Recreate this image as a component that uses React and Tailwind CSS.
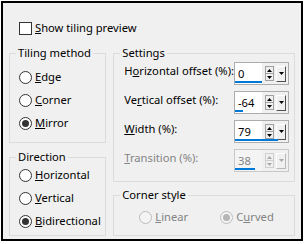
import React from 'react';

const font = { fontFamily: '"Noto Sans", "DejaVu Sans", sans-serif' };

const Radio = ({ checked, disabled, children, className = '' }) => (
    <div className={`flex items-center h-4 ${className}`}>
        <div
            className={`w-[13px] h-[13px] rounded-full border flex items-center justify-center shrink-0 ${
                disabled ? 'border-[#bcbcbc] bg-[#f4f4f4]' : 'border-[#333333] bg-white'
            }`}
        >
            {checked && (
                <div className={`w-[7px] h-[7px] rounded-full ${disabled ? 'bg-[#b5b5b5]' : 'bg-[#333333]'}`} />
            )}
        </div>
        <span className={`ml-[3px] leading-4 whitespace-nowrap ${disabled ? 'text-[#838383]' : 'text-black'}`}>{children}</span>
    </div>
);

const Group = ({ title, className = '', children }) => (
    <fieldset className={`border border-[#dcdcdc] m-0 p-0 min-w-0 ${className}`}>
        <legend className="ml-[6px] px-[2px] leading-4 text-black whitespace-nowrap">{title}</legend>
        {children}
    </fieldset>
);

const Up = ({ color }) => (
    <svg width="5" height="3" viewBox="0 0 5 3">
        <polygon points="0,3 5,3 2.5,0" fill={color} />
    </svg>
);

const Down = ({ color }) => (
    <svg width="5" height="3" viewBox="0 0 5 3">
        <polygon points="0,0 5,0 2.5,3" fill={color} />
    </svg>
);

const Spin = ({ value, bar, disabled }) => {
    const arrow = disabled ? '#a8a8a8' : '#000000';
    return (
        <div className={`relative shrink-0 flex items-center w-[55px] h-[23px] border ${disabled ? 'border-[#c8c8c8]' : 'border-[#acacac]'} bg-[#f0f0f0]`}>
            <div className={`w-[27px] h-full pl-[3px] flex items-center leading-4 ${disabled ? 'bg-[#f4f4f4] text-[#838383]' : 'bg-white text-black'}`}>
                {value}
            </div>
            <div className={`ml-[3px] w-[9px] h-[15px] flex flex-col border ${disabled ? 'border-[#cfcfcf]' : 'border-[#a0a0a0]'} bg-[#f0f0f0]`}>
                <div className={`flex-1 flex items-center justify-center border-b ${disabled ? 'border-[#cfcfcf]' : 'border-[#a0a0a0]'}`}>
                    <Up color={arrow} />
                </div>
                <div className="flex-1 flex items-center justify-center">
                    <Down color={arrow} />
                </div>
            </div>
            <div className={`ml-[2px] w-[10px] h-[16px] flex items-center justify-center border border-t-white border-l-white ${disabled ? 'border-r-[#b8b8b8] border-b-[#b8b8b8]' : 'border-r-[#505050] border-b-[#505050]'} bg-[#f0f0f0]`}>
                <Down color={arrow} />
            </div>
            <div className="absolute left-0 bottom-[1px] h-[2px] bg-[#0078d7]" style={{ width: bar }} />
        </div>
    );
};

const Row = ({ label, children, disabled }) => (
    <div className="flex items-start justify-between">
        <span className={`pt-[1px] leading-4 whitespace-nowrap ${disabled ? 'text-[#838383]' : 'text-black'}`}>{label}</span>
        {children}
    </div>
);

export default function App() {
    return (
        <div className="w-[307px] h-[244px] bg-white pl-px pt-px text-[11.2px]" style={font}>
            <div className="w-[302px] h-[240px] border-2 border-black bg-[#f0f0f0] px-[6px]">
                <div className="mt-[17px] ml-[10px] flex items-center h-4">
                    <div className="w-[13px] h-[13px] border border-[#333333] bg-white" />
                    <span className="ml-[3px] leading-4 whitespace-nowrap">
                        <u>S</u>how tiling preview
                    </span>
                </div>

                <div className="mt-[9px] flex gap-[7px]">
                    <div className="w-[100px] flex flex-col gap-[6px]">
                        <Group title="Tiling method" className="h-[98px]">
                            <div className="mt-[8px] pl-[9px] flex flex-col gap-[7px]">
                                <Radio><u>E</u>dge</Radio>
                                <Radio><u>C</u>orner</Radio>
                                <Radio checked><u>M</u>irror</Radio>
                            </div>
                        </Group>
                        <Group title="Direction" className="h-[87px]">
                            <div className="mt-[2px] pl-[9px] flex flex-col gap-[7px]">
                                <Radio><u>H</u>orizontal</Radio>
                                <Radio><u>V</u>ertical</Radio>
                                <Radio checked><u>B</u>idirectional</Radio>
                            </div>
                        </Group>
                    </div>

                    <div className="w-[183px] flex flex-col gap-[5px]">
                        <Group title="Settings" className="h-[137px]">
                            <div className="mt-px pl-[10px] pr-[5px] flex flex-col gap-[6px]">
                                <Row label={<>H<u>o</u>rizontal offset (%):</>}>
                                    <Spin value="0" bar={27} />
                                </Row>
                                <Row label={<>Ve<u>r</u>tical offset (%):</>}>
                                    <Spin value="-64" bar={8} />
                                </Row>
                                <Row label={<><u>W</u>idth (%):</>}>
                                    <Spin value="79" bar={43} />
                                </Row>
                                <Row label={<><u>T</u>ransition (%):</>} disabled>
                                    <Spin value="38" bar={20} disabled />
                                </Row>
                            </div>
                        </Group>
                        <Group title="Corner style" className="h-[49px]">
                            <div className="mt-[6px] pl-[25px] flex">
                                <Radio disabled className="w-[81px]"><u>L</u>inear</Radio>
                                <Radio disabled checked>C<u>u</u>rved</Radio>
                            </div>
                        </Group>
                    </div>
                </div>
            </div>
        </div>
    );
}
